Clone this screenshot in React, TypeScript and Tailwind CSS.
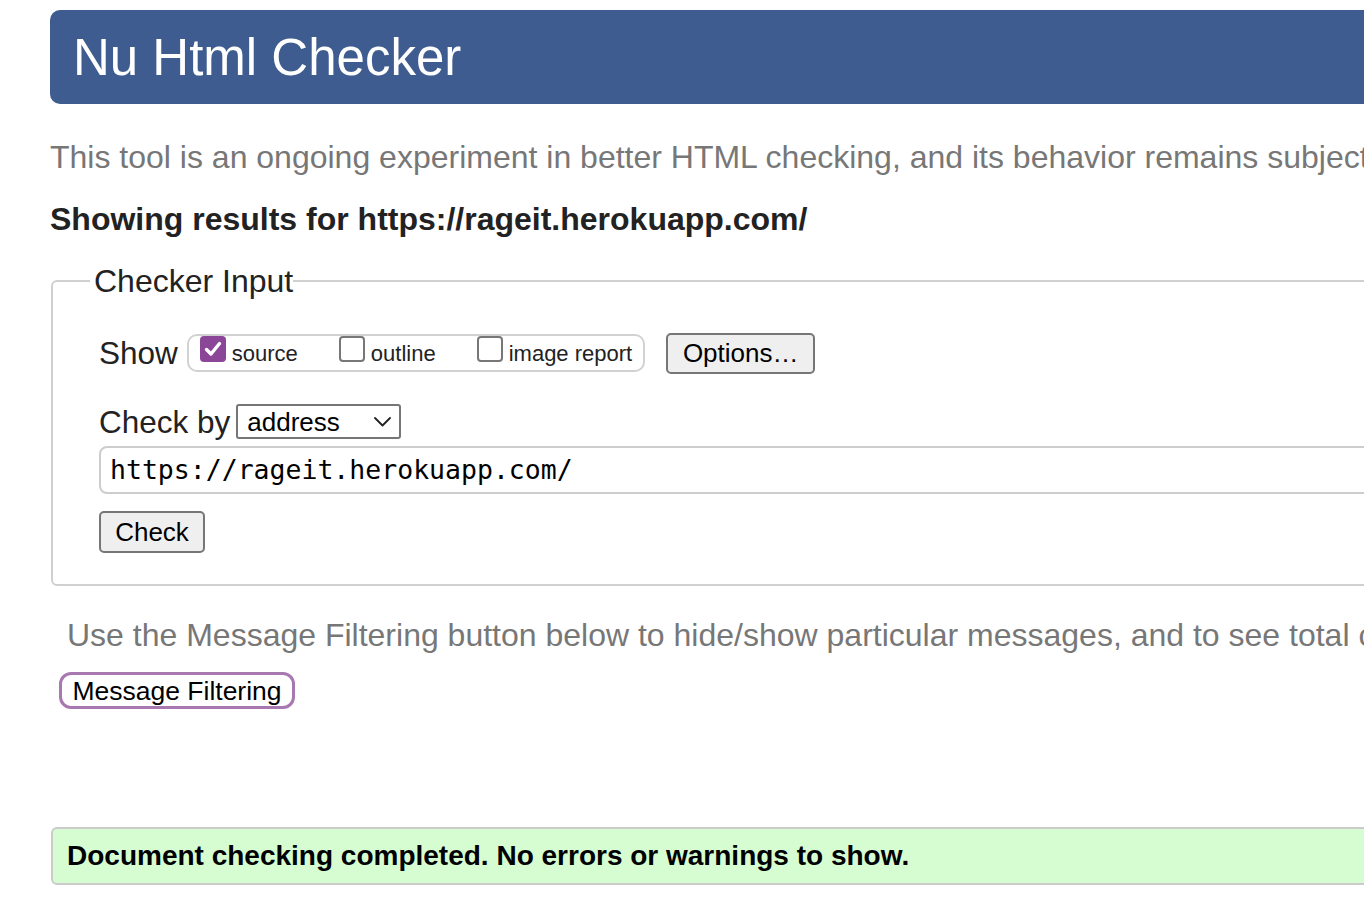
export default function App() {
  const sans = { fontFamily: '"Liberation Sans", Arial, sans-serif' };

  return (
    <div className="w-[1364px] h-[906px] overflow-hidden bg-white text-[#222]" style={sans}>
      <div className="w-[1600px] pl-[50px]">
        {/* HEADER */}
        <div className="mt-[10px] h-[94px] rounded-[10px] bg-[#3e5c8f] pl-[23px] pt-[19px]">
          <h1 className="text-[51px] leading-[58px] text-white">Nu Html Checker</h1>
        </div>

        <p className="mt-[35px] text-[32px] leading-[36px] text-[#777] whitespace-nowrap">
          This tool is an ongoing experiment in better HTML checking, and its behavior remains subject to change
        </p>

        <h2 className="mt-[26px] text-[32px] leading-[36px] font-bold text-[#222] whitespace-nowrap">
          Showing results for https://rageit.herokuapp.com/
        </h2>

        {/* CHECKER INPUT */}
        <fieldset className="mt-[26px] ml-[1px] border-2 border-[#d0d0d0] rounded-[6px] pl-[46px] pb-[31px]">
          <legend className="ml-[-9px] pl-[4px] pr-0 text-[32px] leading-[36px] text-[#222]">Checker Input</legend>

          <div className="mt-[33px] h-[42px] flex items-center">
            <span className="text-[31.5px] leading-[36px] text-[#222]">Show</span>
            <div className="ml-[9px] h-[38px] flex items-start border-2 border-[#d2d2d2] rounded-[10px] pl-[11px] pr-[11px] text-[22px]">
              <span className="w-[26px] h-[26px] rounded-[4px] bg-[#8b4698] flex items-center justify-center">
                <svg width="18" height="16" viewBox="0 0 18 16">
                  <path d="M2.5 8.5 L7 13 L15.5 2.5" fill="none" stroke="white" strokeWidth="3.4" strokeLinecap="round" strokeLinejoin="round" />
                </svg>
              </span>
              <span className="ml-[6px] pt-[5px] leading-[26px] text-[#222]">source</span>
              <span className="ml-[41px] w-[26px] h-[26px] rounded-[4px] border-2 border-[#777] bg-white"></span>
              <span className="ml-[6px] pt-[5px] leading-[26px] text-[#222]">outline</span>
              <span className="ml-[41px] w-[26px] h-[26px] rounded-[4px] border-2 border-[#777] bg-white"></span>
              <span className="ml-[6px] pt-[5px] leading-[26px] text-[#222]">image report</span>
            </div>
            <button className="ml-[21px] w-[149px] h-[41px] bg-[#efefef] border-2 border-[#767676] rounded-[5px] text-[26px] leading-[30px] text-black">
              Options…
            </button>
          </div>

          <div className="mt-[30px] h-[35px] flex items-center">
            <span className="text-[31.5px] leading-[36px] text-[#222]">Check by</span>
            <div className="ml-[6px] w-[165px] h-[35px] border-2 border-[#767676] rounded-[3px] bg-white flex items-center justify-between pl-[9px] pr-[8px]">
              <span className="text-[26px] leading-[30px] text-black">address</span>
              <svg width="17" height="10" viewBox="0 0 17 10">
                <path d="M1 1 L8.5 8.5 L16 1" fill="none" stroke="#222" strokeWidth="1.8" strokeLinecap="round" strokeLinejoin="round" />
              </svg>
            </div>
          </div>

          <div className="mt-[7px] h-[48px] w-[1400px] border-2 border-[#cdcdcd] rounded-[8px] flex items-center pl-[9px]">
            <span className="text-[26.5px] leading-[30px] text-black" style={{ fontFamily: '"DejaVu Sans Mono", "Liberation Mono", monospace' }}>
              https://rageit.herokuapp.com/
            </span>
          </div>

          <button className="mt-[17px] w-[106px] h-[42px] bg-[#efefef] border-2 border-[#767676] rounded-[5px] text-[26px] leading-[30px] text-black">
            Check
          </button>
        </fieldset>

        {/* FILTERING */}
        <div className="pl-[17px] mt-[31px]">
          <p className="text-[32px] leading-[36px] text-[#777] whitespace-nowrap">
            Use the Message Filtering button below to hide/show particular messages, and to see total counts of errors and warnings.
          </p>
        </div>
        <button className="mt-[19px] ml-[9px] w-[236px] h-[37px] border-[3px] border-[#a878b1] rounded-[12px] bg-white text-[26.5px] leading-[30px] text-black">
          Message Filtering
        </button>

        {/* RESULT */}
        <div className="mt-[118px] ml-[1px] h-[58px] border-2 border-[#cbcbcb] rounded-[6px] bg-[#d6fdd1] flex items-center pl-[14px]">
          <span className="text-[28px] leading-[32px] font-bold text-black whitespace-nowrap">
            Document checking completed. No errors or warnings to show.
          </span>
        </div>
      </div>
    </div>
  );
}
